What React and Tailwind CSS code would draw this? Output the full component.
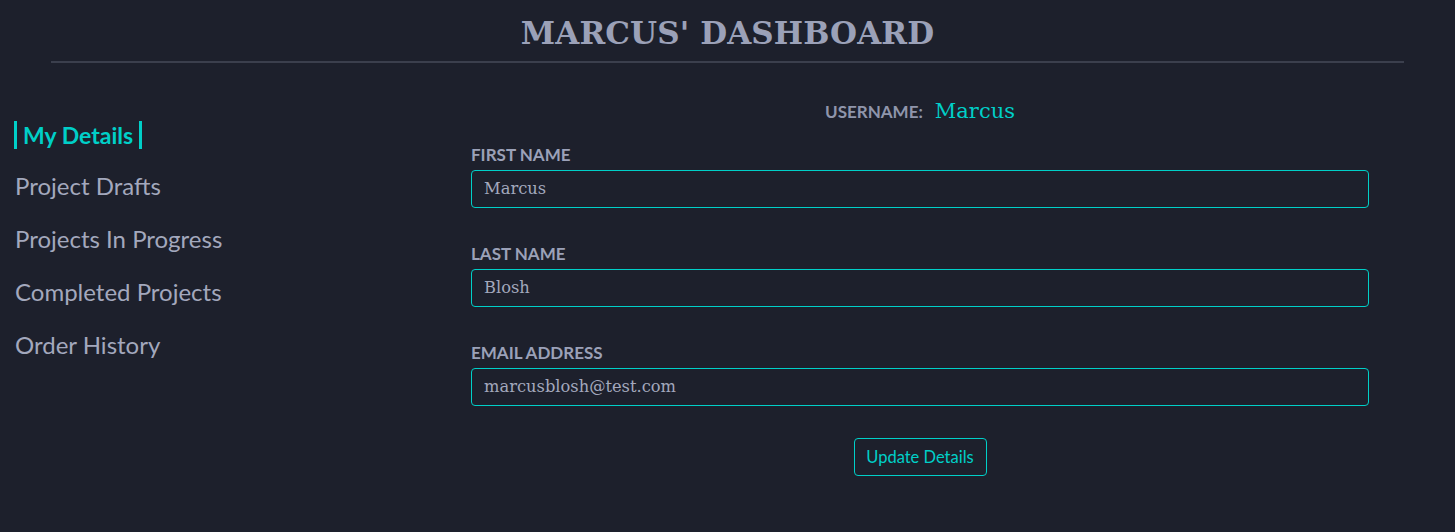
export default function App() {
  const items = ["Project Drafts", "Projects In Progress", "Completed Projects", "Order History"];
  const fields = [
    ["FIRST NAME", "Marcus"],
    ["LAST NAME", "Blosh"],
    ["EMAIL ADDRESS", "marcusblosh@test.com"],
  ];
  return (
    <div className="w-full h-[532px] bg-[#1d202c] overflow-hidden" style={{ fontFamily: "Lato, sans-serif" }}>
      <div className="mx-[51px] border-b-2 border-[#3b3f4d] h-[63px] flex items-center justify-center">
        <h1 className="text-[31px] font-bold text-[#9ba1b8] tracking-[0.1px] pt-[6px]" style={{ fontFamily: '"DejaVu Serif", serif' }}>
          MARCUS' DASHBOARD
        </h1>
      </div>
      <div className="flex">
        <nav className="w-[471px] pl-[14px] pt-[56px] flex flex-col">
          <div className="h-[32px] flex items-center">
            <span className="border-x-[3px] border-[#00cfc8] px-[6px] text-[23px] leading-[28px] font-bold text-[#00cfc8]">My Details</span>
          </div>
          {items.map((t) => (
            <div key={t} className="mt-[21px] pl-[1px] h-[32px] flex items-center text-[24px] leading-[28px] pb-[4px] text-[#a3a8bd]">{t}</div>
          ))}
        </nav>
        <main className="w-[898px] pt-[38px] flex flex-col">
          <div className="flex items-center justify-center gap-[12px] h-[22px]">
            <span className="text-[17px] font-bold text-[#8f95ab]">USERNAME:</span>
            <span className="text-[21px] text-[#00cfc8]" style={{ fontFamily: '"DejaVu Serif", serif' }}>Marcus</span>
          </div>
          {fields.map(([l, v], i) => (
            <div key={l} className={i === 0 ? "mt-[20px]" : "mt-[34px]"}>
              <div className="text-[17px] font-bold text-[#9ba1b8] h-[24px] leading-[24px]">{l}</div>
              <div className="mt-[3px] h-[38px] border border-[#00cfc8] rounded-[4px] flex items-center px-[12px] text-[16.3px] text-[#a3a8bd]" style={{ fontFamily: '"DejaVu Serif", serif' }}>
                {v}
              </div>
            </div>
          ))}
          <div className="flex justify-center mt-[32px]">
            <button className="w-[133px] h-[38px] border border-[#00cfc8] rounded-[4px] text-[16.5px] text-[#00cfc8]">Update Details</button>
          </div>
        </main>
      </div>
    </div>
  );
}
